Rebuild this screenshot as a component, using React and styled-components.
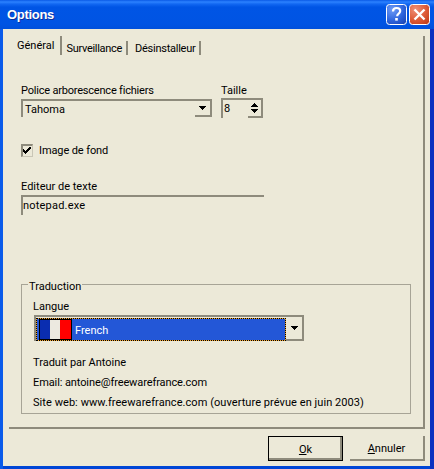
import React from "react";
import styled, { createGlobalStyle } from "styled-components";

const Global = createGlobalStyle`
  html, body { margin: 0; padding: 0; background: #ECE9D8; }
  * { box-sizing: border-box; }
`;

const Window = styled.div`
  width: 434px;
  height: 469px;
  display: flex;
  flex-direction: column;
  overflow: hidden;
  background: linear-gradient(90deg, #0A5BEA 0 3px, #0046D6 3px 430px, #0A30C0 430px);
  font-family: Roboto, "Liberation Sans", Arial, sans-serif;
  font-size: 11px;
  line-height: 13px;
  color: #000;
`;

const TitleBar = styled.div`
  height: 29px;
  flex: none;
  display: flex;
  align-items: center;
  padding: 0 4px 0 7px;
  gap: 2px;
  background: linear-gradient(180deg, #0A5AE6 0, #2C82FF 2px, #1268F2 4px, #0055E5 7px, #0054E3 24px, #0050DC 29px);
`;

const Title = styled.div`
  flex: 1;
  color: #fff;
  font-family: "Liberation Sans", Arial, sans-serif;
  font-weight: 700;
  font-size: 13px;
  letter-spacing: -0.3px;
  text-shadow: 1px 1px 0 #0F2F9A;
  margin-top: -1px;
`;

const CaptionSvg = styled.svg`
  display: block;
  width: 21px;
  height: 21px;
`;

const Client = styled.div`
  flex: 1;
  margin: 0 4px 3px 3px;
  background: #ECE9D8;
  display: flex;
  flex-direction: column;
`;

const Panel = styled.div`
  margin: 7px 5px 0 6px;
  height: 393px;
  flex: none;
  border-right: 2px solid;
  border-bottom: 2px solid;
  border-color: #8E8B7C;
`;

const TabStrip = styled.div`
  height: 19px;
  display: flex;
  align-items: flex-end;
  padding-left: 2px;
`;

const Tab = styled.div`
  height: ${(p) => (p.$active ? 19 : 14)}px;
  padding: ${(p) => (p.$active ? "3px 6px 0 6px" : "0 4px 0 4px")};
  margin-right: ${(p) => (p.$active ? 0 : 3)}px;
  letter-spacing: ${(p) => p.$track || 0}px;
  border-right: 2px solid #8E8B7C;
  display: flex;
  align-items: ${(p) => (p.$active ? "flex-start" : "center")};
  line-height: 13px;
  white-space: nowrap;
`;

const Body = styled.div`
  padding: 29px 12px 0 12px;
`;

const FieldRow = styled.div`
  display: flex;
  gap: 9px;
  align-items: flex-start;
`;

const Field = styled.div`
  display: flex;
  flex-direction: column;
`;

const Label = styled.div`
  height: 13px;
  white-space: nowrap;
  letter-spacing: ${(p) => p.$track || 0}px;
`;

const Select = styled.div`
  width: 191px;
  height: 18px;
  margin-top: 2px;
  display: flex;
  align-items: center;
  justify-content: space-between;
  border-top: 2px solid #8E8B7C;
  border-left: 2px solid #8E8B7C;
  padding-left: 2px;
`;

const SelectValue = styled.span`
  padding-top: 1px;
`;

const ArrowBox = styled.div`
  width: ${(p) => p.$w || 17}px;
  height: 100%;
  flex: none;
  display: flex;
  align-items: center;
  justify-content: center;
  border-right: 2px solid #8E8B7C;
  border-bottom: 2px solid #8E8B7C;
`;

const ArrowSvg = styled.svg`
  display: block;
  width: 7px;
  height: 4px;
`;

const Spin = styled.div`
  width: 42px;
  height: 20px;
  margin-top: 1px;
  display: flex;
  justify-content: space-between;
  border-top: 2px solid #8E8B7C;
  border-left: 2px solid #8E8B7C;
  padding-left: 1px;
  line-height: 14px;
`;

const SpinValue = styled.span`
  padding-top: 2px;
`;

const SpinButtons = styled.div`
  width: 15px;
  flex: none;
  display: flex;
  flex-direction: column;
  align-items: center;
  justify-content: center;
  gap: 2px;
  border-right: 2px solid #8E8B7C;
  border-bottom: 2px solid #8E8B7C;
`;

const CheckRow = styled.div`
  display: flex;
  align-items: center;
  gap: 6px;
  height: 13px;
  margin-top: 26px;
  letter-spacing: -0.1px;
`;

const CheckBox = styled.div`
  width: 12px;
  height: 13px;
  border-top: 2px solid #8E8B7C;
  border-left: 2px solid #8E8B7C;
  border-right: 1px solid #C9C6B6;
  border-bottom: 1px solid #C9C6B6;
`;

const CheckSvg = styled.svg`
  display: block;
  width: 9px;
  height: 9px;
  margin: 0;
`;

const EditorField = styled.div`
  margin-top: 23px;
`;

const TextInput = styled.div`
  width: 243px;
  height: 20px;
  margin-top: 2px;
  padding: 2px 0 0 0;
  line-height: 14px;
  letter-spacing: 0.2px;
  border-top: 2px solid #8E8B7C;
  border-left: 2px solid #8E8B7C;
`;

const Group = styled.div`
  margin-top: 69px;
  height: 130px;
  border: 1px solid #A7A496;
  padding: 0 0 0 11px;
`;

const Legend = styled.div`
  width: fit-content;
  height: 13px;
  margin: -5px 0 0 -5px;
  padding: 0 1px;
  background: #ECE9D8;
`;

const GroupLabel = styled.div`
  height: 13px;
  margin-top: 7px;
`;

const Combo = styled.div`
  width: 270px;
  height: 26px;
  margin: 2px 0 0 1px;
  display: flex;
  border-top: 2px solid #8E8B7C;
  border-left: 2px solid #8E8B7C;
`;

const ComboSelection = styled.div`
  flex: 1;
  display: flex;
  align-items: center;
  gap: 3px;
  padding-left: 2px;
  margin-top: 1px;
  color: #fff;
  border: 1px dotted #000;
  background: linear-gradient(#2357D7, #2357D7) padding-box, #F2A52E border-box;
`;

const ComboText = styled.span`
  padding-top: 2px;
`;

const FlagSvg = styled.svg`
  display: block;
  width: 33px;
  height: 21px;
  flex: none;
`;

const InfoLine = styled.div`
  height: 13px;
  white-space: nowrap;
  margin-top: ${(p) => p.$top}px;
  letter-spacing: ${(p) => p.$track || 0}px;
`;

const Footer = styled.div`
  display: flex;
  justify-content: flex-end;
  gap: 7px;
  padding: 7px 5px 0 0;
`;

const Button = styled.div`
  width: 75px;
  height: 25px;
  padding-top: 1px;
  display: flex;
  align-items: center;
  justify-content: center;
  ${(p) =>
    p.$default
      ? `border: 1px solid #000; box-shadow: inset -2px -2px 0 #8E8B7C;`
      : `border-right: 2px solid #8E8B7C; border-bottom: 2px solid #8E8B7C;`}
`;

const Arrow = ({ up }) => (
  <ArrowSvg viewBox="0 0 7 4" shapeRendering="crispEdges">
    <path d={up ? "M3 0h1v1h1v1h1v1h1v1H0V3h1V2h1V1h1z" : "M0 0h7v1H6v1H5v1H4v1H3V3H2V2H1V1H0z"} fill="#000" />
  </ArrowSvg>
);

export default function App() {
  return (
    <Window>
      <Global />
      <TitleBar>
        <Title>Options</Title>
        <CaptionSvg viewBox="0 0 21 21">
          <defs>
            <radialGradient id="help" cx="0.3" cy="0.25" r="0.9">
              <stop offset="0" stopColor="#6E9BF5" />
              <stop offset="0.6" stopColor="#2F66DE" />
              <stop offset="1" stopColor="#1B47B8" />
            </radialGradient>
          </defs>
          <rect x="0.5" y="0.5" width="20" height="20" rx="3" fill="url(#help)" stroke="#fff" />
          <path d="M7 7.5C7 5 8.8 4 10.6 4c2 0 3.6 1.2 3.6 3.1 0 1.5-.9 2.2-2 3-.8.6-1 1-1 2.2" fill="none" stroke="#fff" strokeWidth="2.2" />
          <rect x="9.2" y="14" width="2.6" height="2.6" fill="#fff" />
        </CaptionSvg>
        <CaptionSvg viewBox="0 0 21 21">
          <defs>
            <radialGradient id="close" cx="0.3" cy="0.25" r="0.9">
              <stop offset="0" stopColor="#EE9078" />
              <stop offset="0.6" stopColor="#DD5A36" />
              <stop offset="1" stopColor="#C23E1A" />
            </radialGradient>
          </defs>
          <rect x="0.5" y="0.5" width="20" height="20" rx="3" fill="url(#close)" stroke="#fff" />
          <path d="M5.5 5.5l10 10M15.5 5.5l-10 10" stroke="#fff" strokeWidth="2.4" />
        </CaptionSvg>
      </TitleBar>
      <Client>
        <Panel>
          <TabStrip>
            <Tab $active>Général</Tab>
            <Tab $track={-0.3}>Surveillance</Tab>
            <Tab $track={-0.25}>Désinstalleur</Tab>
          </TabStrip>
          <Body>
            <FieldRow>
              <Field>
                <Label $track={-0.2}>Police arborescence fichiers</Label>
                <Select>
                  <SelectValue>Tahoma</SelectValue>
                  <ArrowBox><Arrow /></ArrowBox>
                </Select>
              </Field>
              <Field>
                <Label>Taille</Label>
                <Spin>
                  <SpinValue>8</SpinValue>
                  <SpinButtons>
                    <Arrow up />
                    <Arrow />
                  </SpinButtons>
                </Spin>
              </Field>
            </FieldRow>
            <CheckRow>
              <CheckBox>
                <CheckSvg viewBox="0 0 9 9" shapeRendering="crispEdges">
                  <path d="M0 3h1v1h1v1h1V4h1V3h1V2h1V1h2v2H7v1H6v1H5v1H4v1H3v1H2V7H1V6H0z" fill="#000" />
                </CheckSvg>
              </CheckBox>
              <span>Image de fond</span>
            </CheckRow>
            <EditorField>
              <Label>Editeur de texte</Label>
              <TextInput>notepad.exe</TextInput>
            </EditorField>
            <Group>
              <Legend>Traduction</Legend>
              <GroupLabel>Langue</GroupLabel>
              <Combo>
                <ComboSelection>
                  <FlagSvg viewBox="0 0 33 21" shapeRendering="crispEdges">
                    <rect width="33" height="21" fill="#000" />
                    <rect x="1" y="1" width="10" height="19" fill="#0A2DB0" />
                    <rect x="11" y="1" width="10" height="19" fill="#ECE9E0" />
                    <rect x="21" y="1" width="11" height="19" fill="#FF0000" />
                  </FlagSvg>
                  <ComboText>French</ComboText>
                </ComboSelection>
                <ArrowBox $w={18}><Arrow /></ArrowBox>
              </Combo>
              <InfoLine $top={15}>Traduit par Antoine</InfoLine>
              <InfoLine $top={7} $track={-0.1}>Email: antoine@freewarefrance.com</InfoLine>
              <InfoLine $top={7} $track={0.06}>Site web: www.freewarefrance.com (ouverture prévue en juin 2003)</InfoLine>
            </Group>
          </Body>
        </Panel>
        <Footer>
          <Button $default><span><u>O</u>k</span></Button>
          <Button><span><u>A</u>nnuler</span></Button>
        </Footer>
      </Client>
    </Window>
  );
}
